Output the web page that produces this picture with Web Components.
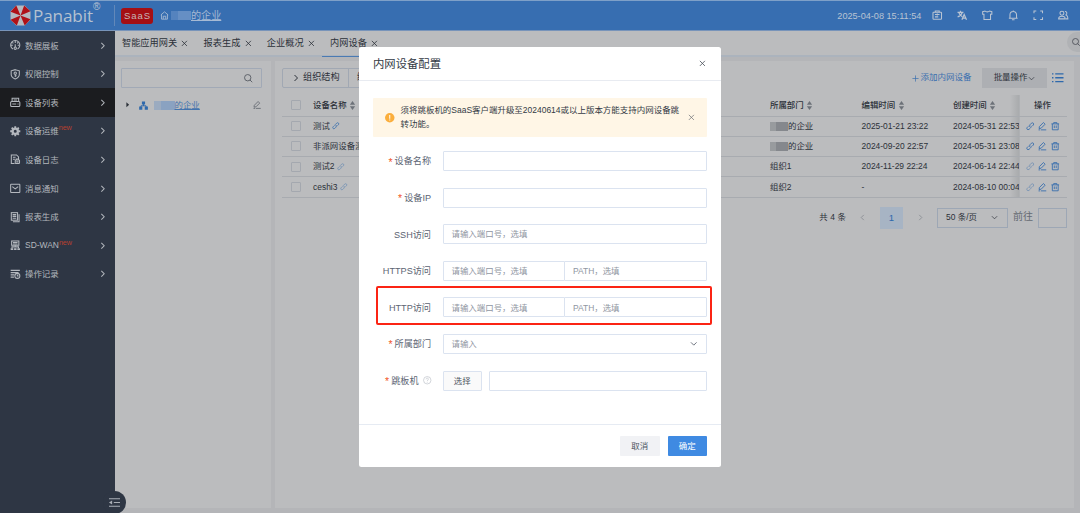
<!DOCTYPE html>
<html>
<head>
<meta charset="utf-8">
<title>Panabit</title>
<style>
	html, body {
		margin: 0;
		height: 100%;
		overflow: hidden;
	}
	body {
		font-family: "Liberation Sans", "Noto Sans CJK SC", sans-serif;
		font-size: 8.45px;
		color: #2c3139;
		--line: #a8abb0;
		--blue: #2f69ac;
		--field: #dbe3f0;
	}
</style>
</head>
<body>
<panabit-app></panabit-app>
<device-dialog></device-dialog>

<script>
(function PanabitConsole() {

// all icons are drawn on a 16x16 grid
const ICONS = {
	gauge: '<path d="M4.500 13.800a7 7 0 117 0"/><path d="M8 1.500v3M1.500 8h2.800M11.700 8h2.800M3.500 3.500l1.700 1.700M12.500 3.500l-1.700 1.700M8 6.500v4"/><circle cx="8" cy="12.500" r="1.800"/>',
	shield: '<path d="M8 1l6.200 1.800v5.400c0 3.200-2.800 5.400-6.200 7-3.400-1.600-6.200-3.800-6.200-7V2.800z"/><circle cx="8" cy="6.300" r="1.800"/><path d="M8 8v4M8 10.400h2"/>',
	devices: '<path d="M3.200 7V1.800h10V7M5.500 4.500h5.500"/><rect x="1" y="7" width="14" height="7.500" rx="1.500"/><path d="M3.500 10.700h6M11.500 10.700h1.500"/>',
	gear: '<circle cx="8" cy="8" r="4" stroke-width="3.400"/><path stroke-width="2.800" d="M8 .3v3M8 12.700v3M.3 8h3M12.700 8h3M2.600 2.600l2 2M11.400 11.400l2 2M2.600 13.400l2-2M11.400 4.600l2-2"/>',
	log: '<path d="M7 14.500H2V1.500h8l3 3V8M4.500 5h4M4.500 8h3"/><rect x="8" y="9" width="6.500" height="5.500" rx="1"/><path d="M9.500 9V7.500h3.500V9M9.500 12h3.500"/>',
	mail: '<rect x="1" y="2" width="14" height="12.500" rx=".8"/><path d="M3.500 5.500L8 9l4.500-3.500"/>',
	report: '<rect x="2" y="1" width="9.500" height="11.500"/><path d="M4 4h5.500M4 6.700h5.500M4 9.400h5.500M13.800 3.500v11.300H4.500"/>',
	wan: '<rect x="2.500" y="1.500" width="11" height="6.500"/><path d="M4.500 3.700h7M4.500 6h7M8 8v3M3 12.500V10.500h10v2"/><path stroke-width="2.500" d="M1 13.800h4M6.200 13.800h3.800M11.200 13.800h4"/>',
	record: '<path stroke-width="1.900" d="M1 2h14M1 5.500h12M1 9h5.500M1 12.500h5"/><circle cx="11.200" cy="10.500" r="3.800"/><path d="M11.200 8.500v2.200h2"/>',
	right: '<path d="M5 2l6 6-6 6"/>',
	left: '<path d="M11 2l-6 6 6 6"/>',
	down: '<path d="M2 5l6 6 6-6"/>',
	caret: '<path fill="currentColor" stroke="none" d="M4 1l8 7-8 7z"/>',
	close: '<path d="M2 2l12 12M14 2L2 14"/>',
	search: '<circle cx="7" cy="7" r="6"/><path d="M11.200 11.200L15.500 15.500"/>',
	home: '<path d="M1.500 7L8 1.500 14.500 7M2.800 6v8.500h10.400V6M5.800 14V9.300h4.400V14"/>',
	clip: '<rect x="1.500" y="3.500" width="13" height="10.500" rx="1"/><path d="M5 3.500V1.500h6v2M4.500 7h7M4.500 10.500h5M8 5.500v3"/>',
	lang: '<path stroke-width="1.900" d="M.8 3.500h9M5.300 1v2.500M8 3.500C7 7 4 9.500 1 10.500M2.800 4c1 3 3 5 5.200 6M7.500 15l3.400-8 3.600 8M8.800 12.500h4.500"/>',
	shirt: '<path d="M4.500 1.500c1.500 1.800 5.500 1.800 7 0l3.500 1v4h-2v8H3v-8H1v-4z"/>',
	bell: '<path d="M1.300 12.500h13.400M3 12.500V7.300a5 5 0 0110 0v5.200M8 2.300V.8M6 15h4"/>',
	full: '<path d="M1.500 5V1.500H5M11 1.500h3.500V5M14.500 11v3.500H11M5 14.500H1.500V11"/>',
	users: '<circle cx="6" cy="5" r="3"/><path d="M1 13.500c0-5.500 10-5.500 10 0zM10.500 2.200c3.500-.5 4 4.500 1 5.300 2.500.3 3.500 2.500 3.500 6h-3"/>',
	tree: '<path d="M8 5v4M3.500 11V8.500h9V11"/><path fill="currentColor" stroke="none" d="M5.200 .8h5.600v5.600H5.200zM.3 9.800h5.600v5.600H.3zM10.200 9.800h5.600v5.600h-5.600z"/>',
	edit: '<path d="M2 12.300l.7-3.800L10.200 1l3.200 3.200-7.500 7.500zM5.500 14.800H15.500M1 14.800h3"/>',
	trash: '<path d="M.8 3.500h14.400M5 3.200V1.200h6v2M2.500 3.500v11.200h11V3.500M6.200 6.500v5M9.800 6.500v5"/>',
	link: '<path d="M7 9.200C5.500 7.700 6.500 6 7.500 5l2.700-2.700c2.500-2.300 5.800 1 3.500 3.500l-2 2M9 6.800c1.500 1.500.5 3.200-.5 4.200l-2.700 2.700c-2.500 2.300-5.800-1-3.500-3.500l2-2"/>',
	list: '<path stroke-width="1.800" d="M4.500 2.500H16M4.500 8H16M4.500 13.500H16M0 2.500h2M0 8h2M0 13.500h2"/>',
	fold: '<path d="M0 2.500h16M7 8h9M0 13.500h16"/><path fill="currentColor" stroke="none" d="M0 8l4.500-3v6z"/>',
	sort: '<path fill="currentColor" stroke="none" d="M8 0l5.500 6.500h-11zM8 16l5.500-6.500h-11z"/>',
	help: '<circle cx="8" cy="8" r="7"/><path d="M5.800 6.300c0-3 4.400-3 4.400-.3 0 1.600-2.200 1.700-2.200 3.500M8 11v1.500"/>',
	warn: '<circle cx="8" cy="8" r="8" fill="#fbae3c" stroke="none"/><path stroke="#fff" stroke-width="1.700" d="M8 3.500v6M8 11v1.700"/>',
	plus: '<path d="M8 1v14M1 8h14"/>',
};

// shorthand used inside the templates
const icon = (name, size = 10, style = '') =>
	`<p-icon name="${name}" size="${size}" style="${style}"></p-icon>`;

class PanabitElement extends HTMLElement {
	connectedCallback() {
		if (this.shadowRoot) return;
		this.attachShadow({mode: 'open'});
		this.shadowRoot.innerHTML = `<style>* { box-sizing: border-box; }</style>${this.render()}`;
	}
}

class PIcon extends PanabitElement {
	render() {
		const size = this.getAttribute('size') || 10;
		return `
		<style>
			:host { display: inline-flex; flex: none; }
			svg { display: block; fill: none; stroke: currentColor; stroke-width: var(--stroke, 1.6); overflow: visible; }
		</style>
		<svg width="${size}" height="${size}" viewBox="0 0 16 16">${ICONS[this.getAttribute('name')]}</svg>`;
	}
}

// pixelated part of a company name
class MaskedName extends PanabitElement {
	render() {
		return `
		<style>
			:host { display: inline-flex; width: 21px; height: 9px; flex: none; overflow: hidden; }
			i { flex: 1; background: var(--m, #85888d); }
			i:nth-child(1) { flex: 1.2; opacity: .85; }
			i:nth-child(2) { opacity: .4; }
			i:nth-child(3) { opacity: .65; }
		</style>
		<i></i><i></i><i></i>`;
	}
}

class TopBar extends PanabitElement {
	render() {
		return `
		<style>
			:host {
				display: flex; align-items: center; height: 31px; flex: none;
				background: #376eb1; border-top: 1px solid #7ea0c8; border-bottom: 1px solid #7894ba;
				color: #b9c4d3; font-size: 9.15px;
			}
			.logo { display: flex; align-items: center; width: 115px; height: 21px; padding-left: 10px; border-right: 1px solid #6288b9; }
			.name { font: 17.1px/21px "Open Sans", sans-serif; margin-left: 2px; letter-spacing: -.1px; color: #b5c1d0; }
			sup { font: 10px/10px "Liberation Sans", sans-serif; align-self: flex-start; margin-top: -3px; margin-left: 0; }
			.saas {
				background: #a50f14; border-radius: 3px; width: 32px; height: 16px; margin: 0 7px 0 6px;
				display: flex; align-items: center; justify-content: center;
				font-size: 9.5px; letter-spacing: 1px; padding-left: 1px; color: #c6b6b9;
			}
			a { display: flex; align-items: center; --m: #668fc4; color: #a6bad4; }
			u { font-size: 10.1px; text-underline-offset: 1px; margin-top: -3px; }
			.tools { margin-left: auto; display: flex; align-items: center; gap: 14.7px; padding-right: 11.5px; }
			.tools span { margin-right: -4px; }
		</style>
		<div class="logo">
			<svg width="21" height="21" viewBox="-10 -10 20 20">
				<path fill="#b5b9c0" d="M-4-9.500h8L9.500-4v8L4 9.500h-8L-9.500 4v-8z"/>
				<g fill="#b01118">
					<path d="M0 0L-9.500-3.500L-4-9.500z"/>
					<path d="M0 0L-9.500-3.500L-4-9.500z" transform="rotate(90)"/>
					<path d="M0 0L-9.500-3.500L-4-9.500z" transform="rotate(180)"/>
					<path d="M0 0L-9.500-3.500L-4-9.500z" transform="rotate(270)"/>
				</g>
			</svg>
			<span class="name">Panabit</span><sup>®</sup>
		</div>
		<span class="saas">SaaS</span>
		<a>${icon('home', 9, 'margin-right:2px')}<masked-name style="width:20px"></masked-name><u>的企业</u></a>
		<div class="tools">
			<span>2025-04-08 15:11:54</span>
			${['clip', 'lang', 'shirt', 'bell', 'full', 'users'].map(n => icon(n, 10.5)).join('')}
		</div>`;
	}
}

class MenuItem extends PanabitElement {
	render() {
		return `
		<style>
			:host { display: flex; align-items: center; height: 28.6px; padding: 0 9px 0 9.5px; flex: none; color: #b4b8be; }
			:host([active]) { background: #1b1c1f; }
			span { margin: -1.4px 0 0 5px; white-space: nowrap; }
			b { font: 7.2px/8px "Liberation Sans", sans-serif; color: #b8402f; align-self: flex-start; margin-top: 7.6px; letter-spacing: -.1px; }
		</style>
		${icon(this.getAttribute('icon'), 10.5)}
		<span><slot></slot></span>${this.hasAttribute('fresh') ? '<b>new</b>' : ''}
		${icon('right', 7.5, 'margin-left:auto;--stroke:2.2')}`;
	}
}

class SideMenu extends PanabitElement {
	render() {
		return `
		<style>
			:host { display: flex; flex-direction: column; width: 115px; flex: none; background: #2e3644; position: relative; z-index: 1; }
			.fold {
				position: absolute; left: 103px; bottom: -1px; width: 23px; height: 23px; border-radius: 50%;
				background: #2e3644; color: #a9aeb6; display: flex; align-items: center; justify-content: center;
			}
		</style>
		<menu-item icon="gauge">数据展板</menu-item>
		<menu-item icon="shield">权限控制</menu-item>
		<menu-item icon="devices" active>设备列表</menu-item>
		<menu-item icon="gear" fresh>设备运维</menu-item>
		<menu-item icon="log">设备日志</menu-item>
		<menu-item icon="mail">消息通知</menu-item>
		<menu-item icon="report">报表生成</menu-item>
		<menu-item icon="wan" fresh>SD-WAN</menu-item>
		<menu-item icon="record">操作记录</menu-item>
		<div class="fold">${icon('fold', 11)}</div>`;
	}
}

class TabBar extends PanabitElement {
	render() {
		const tabs = ['智能应用网关', '报表生成', '企业概况', '内网设备'];
		return `
		<style>
			:host {
				display: flex; height: 26px; flex: none; padding-left: 7px; gap: 15.4px; font-size: 9.2px;
				background: #bbbcbe; border-bottom: 2px solid #abb3bd;
			}
			div { display: flex; align-items: center; gap: 4.3px; white-space: nowrap; height: 24px; }
			div span { margin-top: -1.4px; }
			div.on { box-shadow: -7px 1.5px 0 -0px #4a7ab3; clip-path: inset(0 0 -2px -8px); background: #bbbcbe; }
			div.on { box-shadow: none; position: relative; }
			div.on::after { content: ""; position: absolute; left: -8px; right: -4px; bottom: -2px; height: 1.5px; background: #4a7ab3; }
			.find { margin-left: auto; width: 13px; height: 20px; border-radius: 10px 0 0 10px; background: #b0b2b5; justify-content: flex-end; margin-top: 1px; overflow: hidden; color: #50545c; }
		</style>
		${tabs.map((t, i) => `<div class="${i === 3 ? 'on' : ''}"><span>${t}</span>${icon('close', 6.8, '--stroke:1.9')}</div>`).join('')}
		<div class="find">${icon('search', 8, '--stroke:1.8')}</div>`;
	}
}

class OrgTree extends PanabitElement {
	render() {
		return `
		<style>
			:host { display: block; width: 156px; flex: none; background: #bbbcbe; padding: 7px 9px 0 6px; }
			.search { height: 20px; border: 1px solid #a1a9b6; border-radius: 1px; display: flex; align-items: center; justify-content: flex-end; padding-right: 8.5px; color: #50555d; }
			.node { display: flex; align-items: center; height: 34px; padding: 0 1px 0 4px; --m: #8aa2c1; }
			u { color: #4474ae; text-underline-offset: 1px; margin-top: -1.4px; }
		</style>
		<div class="search">${icon('search', 8.5)}</div>
		<div class="node">${icon('caret', 5.5, 'margin-right:8px')}
			${icon('tree', 9, 'color:#2f69ac;margin-right:6px')}
			<masked-name></masked-name><u>的企业</u>
			${icon('edit', 8, 'margin-left:auto;color:#60656d')}</div>`;
	}
}

class DeviceTable extends PanabitElement {
	render() {
		const rows = [
			['测试', 1, '的企业', '2025-01-21 23:22', '2024-05-31 22:53', 1],
			['非派网设备测试', 1, '的企业', '2024-09-20 22:57', '2024-05-31 23:08', 1],
			['测试2', .55, '组织1', '2024-11-29 22:24', '2024-06-14 22:44', .5],
			['ceshi3', .55, '组织2', '-', '2024-08-10 00:04', .5],
		];
		const sort = icon('sort', 9, 'color:#6d7279;margin-left:1.5px;transform:scaleX(.85)');
		return `
		<style>
			:host { display: block; }
			.row {
				display: grid; grid-template-columns: 27px 457px 91.5px 91.5px 69.5px 48.5px;
				height: 20.3px; border-bottom: 1px solid var(--line);
			}
			.row > div { display: flex; align-items: center; white-space: nowrap; overflow: hidden; padding-left: 4px; }
			.row > div:first-child { padding-left: 9px; }
			.row span { line-height: 12px; margin-top: -1px; }
			.head { height: 21.5px; font-weight: 500; }
			i { width: 10px; height: 10px; border: 1px solid #a4a8af; border-radius: 1px; }
			.row > .ops { gap: 3.8px; color: var(--blue); padding-left: 6.5px; background: #bbbcbe; border-left: 1px solid #aeb0b3; }
			.row > .head-op { padding-left: 14.5px; color: #2c3139; }
			.date { background: linear-gradient(to right, transparent 61px, #a9abad); }
		</style>
		<div class="row head">
			<div><i></i></div><div><span>设备名称</span>${sort}</div><div><span>所属部门</span>${sort}</div>
			<div><span>编辑时间</span>${sort}</div><div class="date"><span>创建时间</span>${sort}</div><div class="ops head-op"><span>操作</span></div>
		</div>
		${rows.map(([name, on, org, edited, made, op]) => `
		<div class="row">
			<div><i></i></div>
			<div><span>${name}</span>${icon('link', 7.5, `margin-left:2.5px;color:#2f69ac;opacity:${on}`)}</div>
			<div>${org === '的企业' ? '<masked-name style="width:18px"></masked-name>' : ''}<span>${org}</span></div>
			<div><span>${edited}</span></div><div class="date"><span>${made}</span></div>
			<div class="ops">${icon('link', 8.5, `opacity:${op}`)}${icon('edit', 8.5)}${icon('trash', 8.5)}</div>
		</div>`).join('')}`;
	}
}

class DevicePanel extends PanabitElement {
	render() {
		return `
		<style>
			:host { display: block; flex: 1; background: #bbbcbe; padding: 7px 7px 0 7px; }
			.bar { display: flex; align-items: center; height: 20px; margin-bottom: 7px; padding-right: 4px; }
			.btn { display: flex; align-items: center; height: 20px; border: 1px solid #a1a8b3; white-space: nowrap; font-size: 9.15px; }
			span { margin-top: -1.2px; line-height: 12px; white-space: nowrap; }
			.org { width: 67px; padding-left: 8.5px; gap: 3.5px; border-radius: 2px 0 0 2px; }
			.bind { width: 67px; padding-left: 8px; margin-left: -1px; }
			.add { margin-left: auto; color: #3c70af; display: flex; align-items: center; font-size: 8.5px; gap: 1px; }
			.batch { background: #adafb3; width: 65px; height: 20px; margin: 0 4.5px 0 10.5px; display: flex; align-items: center; justify-content: center; gap: 1px; }
			.pager { display: flex; align-items: center; justify-content: flex-end; height: 20px; margin-top: 10px; }
			.page { width: 23px; height: 22px; background: #a7b4c4; color: #2f69ac; display: flex; align-items: center; justify-content: center; font-size: 9.5px; margin: 0 14px; }
			.size { width: 71px; height: 20px; border: 1px solid #9da7b5; display: flex; align-items: center; justify-content: space-between; padding: 0 9px 0 8px; margin: 0 5px 0 13px; }
			.jump { width: 29px; height: 20px; border: 1px solid #9da7b5; margin-left: 5px; }
		</style>
		<div class="bar">
			<div class="btn org">${icon('right', 8, '--stroke:2')}<span>组织结构</span></div><div class="btn bind"><span>绑定设备</span></div>
			<div class="add">${icon('plus', 7)}<span>添加内网设备</span></div>
			<div class="batch"><span>批量操作</span>${icon('down', 7)}</div>
			${icon('list', 11.5, 'color:#2f69ac')}
		</div>
		<device-table></device-table>
		<div class="pager">
			<span style="margin-right:13px;letter-spacing:.1px">共 4 条</span>${icon('left', 7, 'color:#7d8188')}
			<div class="page">1</div>${icon('right', 7, 'color:#7d8188')}
			<div class="size"><span>50 条/页</span>${icon('down', 7)}</div>
			<span style="font-size:10px;color:#666b74">前往</span><div class="jump"></div>
		</div>`;
	}
}

class PanabitApp extends PanabitElement {
	render() {
		return `
		<style>
			:host { display: flex; flex-direction: column; height: 100%; background: #b4b5b8; }
			.body { display: flex; flex: 1; min-height: 0; }
			.main { flex: 1; display: flex; flex-direction: column; min-width: 0; }
			.split { flex: 1; display: flex; gap: 4px; padding: 4px 6px 5px 0; }
		</style>
		<top-bar></top-bar>
		<div class="body">
			<side-menu></side-menu>
			<div class="main">
				<tab-bar></tab-bar>
				<div class="split"><org-tree></org-tree><device-panel></device-panel></div>
			</div>
		</div>`;
	}
}

class FormRow extends PanabitElement {
	render() {
		return `
		<style>
			:host { display: flex; align-items: center; height: 20px; margin-bottom: 16.6px; }
			label { width: 58px; margin-right: 11.5px; flex: none; display: flex; justify-content: flex-end; align-items: center; white-space: nowrap; font-size: 9.15px; color: #5c6573; }
			span { margin-top: -1.2px; }
			em { font-style: normal; color: #f2592a; margin-right: 2px; font-size: 10.5px; margin-top: 1px; }
			div { flex: 1; display: flex; }
		</style>
		<label>${this.hasAttribute('required') ? '<em>*</em>' : ''}<span>${this.getAttribute('label')}</span>
			${this.hasAttribute('help') ? icon('help', 8.5, 'margin-left:4px;color:#b9bec7;--stroke:1.2') : ''}</label>
		<div><slot></slot></div>`;
	}
}

class TextField extends PanabitElement {
	render() {
		return `
		<style>
			:host {
				display: flex; align-items: center; justify-content: space-between; flex: 1; height: 20px; box-sizing: border-box;
				border: 1px solid var(--field); border-radius: 1px; padding: 0 9px 0 8px; color: #8f96a2; background: #fff;
			}
			span { margin-top: -1.4px; }
		</style>
		<span><slot></slot></span>${this.hasAttribute('select') ? icon('down', 7.5, 'color:#5d6470;--stroke:1.9') : ''}`;
	}
}

class PButton extends PanabitElement {
	render() {
		return `
		<style>
			:host {
				display: flex; align-items: center; justify-content: center; box-sizing: border-box; flex: none;
				width: 39.5px; height: 20px; border-radius: 1px; background: #f1f2f5; color: #4d5561;
			}
			:host([primary]) { background: #3f8ae2; color: #fff; }
			:host([plain]) { background: #fafafa; border: 1px solid var(--field); }
			span { margin-top: -1.4px; }
		</style>
		<span><slot></slot></span>`;
	}
}

class DeviceDialog extends PanabitElement {
	render() {
		return `
		<style>
			:host {
				position: absolute; left: 359px; top: 47px; width: 362px; height: 420px; z-index: 5;
				display: flex; flex-direction: column; box-sizing: border-box;
				background: #fff; border-radius: 2.5px; color: #333a45;
			}
			header { height: 34px; border-bottom: 1px solid #e8ebf1; display: flex; align-items: center; justify-content: space-between; padding: 0 15px 0 14px; font-size: 11.35px; }
			header span { margin-top: -2px; }
			main { flex: 1; padding: 17px 14px 0; }
			.alert { display: flex; align-items: center; height: 39px; background: #fff6e6; border-radius: 1px; padding: 0 12.5px 0 12px; margin-bottom: 14px; }
			.alert p { margin: 0 0 0 6px; width: 282px; line-height: 13.5px; flex: none; white-space: nowrap; font-size: 8.47px; }
			footer { height: 43px; border-top: 1px solid #e6ebf3; display: flex; align-items: center; justify-content: flex-end; gap: 8px; padding: 0 14px; }
			.mark { position: absolute; left: 17px; top: 239px; width: 336px; height: 39px; border: 2px solid #fb2414; border-radius: 2px; }
		</style>
		<header><span>内网设备配置</span>${icon('close', 6.8, 'color:#4a505a;--stroke:1.9')}</header>
		<main>
			<div class="alert">
				${icon('warn', 9.5)}
				<p>须将跳板机的SaaS客户端升级至20240614或以上版本方能支持内网设备跳<br>转功能。</p>
				${icon('close', 6.8, 'margin-left:auto;color:#6c6f75;--stroke:1.7')}
			</div>
			<form-row label="设备名称" required><text-field></text-field></form-row>
			<form-row label="设备IP" required><text-field></text-field></form-row>
			<form-row label="SSH访问"><text-field>请输入端口号，选填</text-field></form-row>
			<form-row label="HTTPS访问">
				<text-field style="flex:0 0 122.5px">请输入端口号，选填</text-field>
				<text-field style="margin-left:-1px">PATH，选填</text-field>
			</form-row>
			<form-row label="HTTP访问">
				<text-field style="flex:0 0 122.5px">请输入端口号，选填</text-field>
				<text-field style="margin-left:-1px">PATH，选填</text-field>
			</form-row>
			<form-row label="所属部门" required><text-field select>请输入</text-field></form-row>
			<form-row label="跳板机" required help>
				<p-button plain>选择</p-button>
				<text-field style="margin-left:7px"></text-field>
			</form-row>
		</main>
		<footer><p-button>取消</p-button><p-button primary>确定</p-button></footer>
		<div class="mark"></div>`;
	}
}

customElements.define('p-icon', PIcon);
customElements.define('masked-name', MaskedName);
customElements.define('top-bar', TopBar);
customElements.define('menu-item', MenuItem);
customElements.define('side-menu', SideMenu);
customElements.define('tab-bar', TabBar);
customElements.define('org-tree', OrgTree);
customElements.define('device-table', DeviceTable);
customElements.define('device-panel', DevicePanel);
customElements.define('form-row', FormRow);
customElements.define('text-field', TextField);
customElements.define('p-button', PButton);
customElements.define('panabit-app', PanabitApp);
customElements.define('device-dialog', DeviceDialog);

})();
</script>
</body>
</html>
